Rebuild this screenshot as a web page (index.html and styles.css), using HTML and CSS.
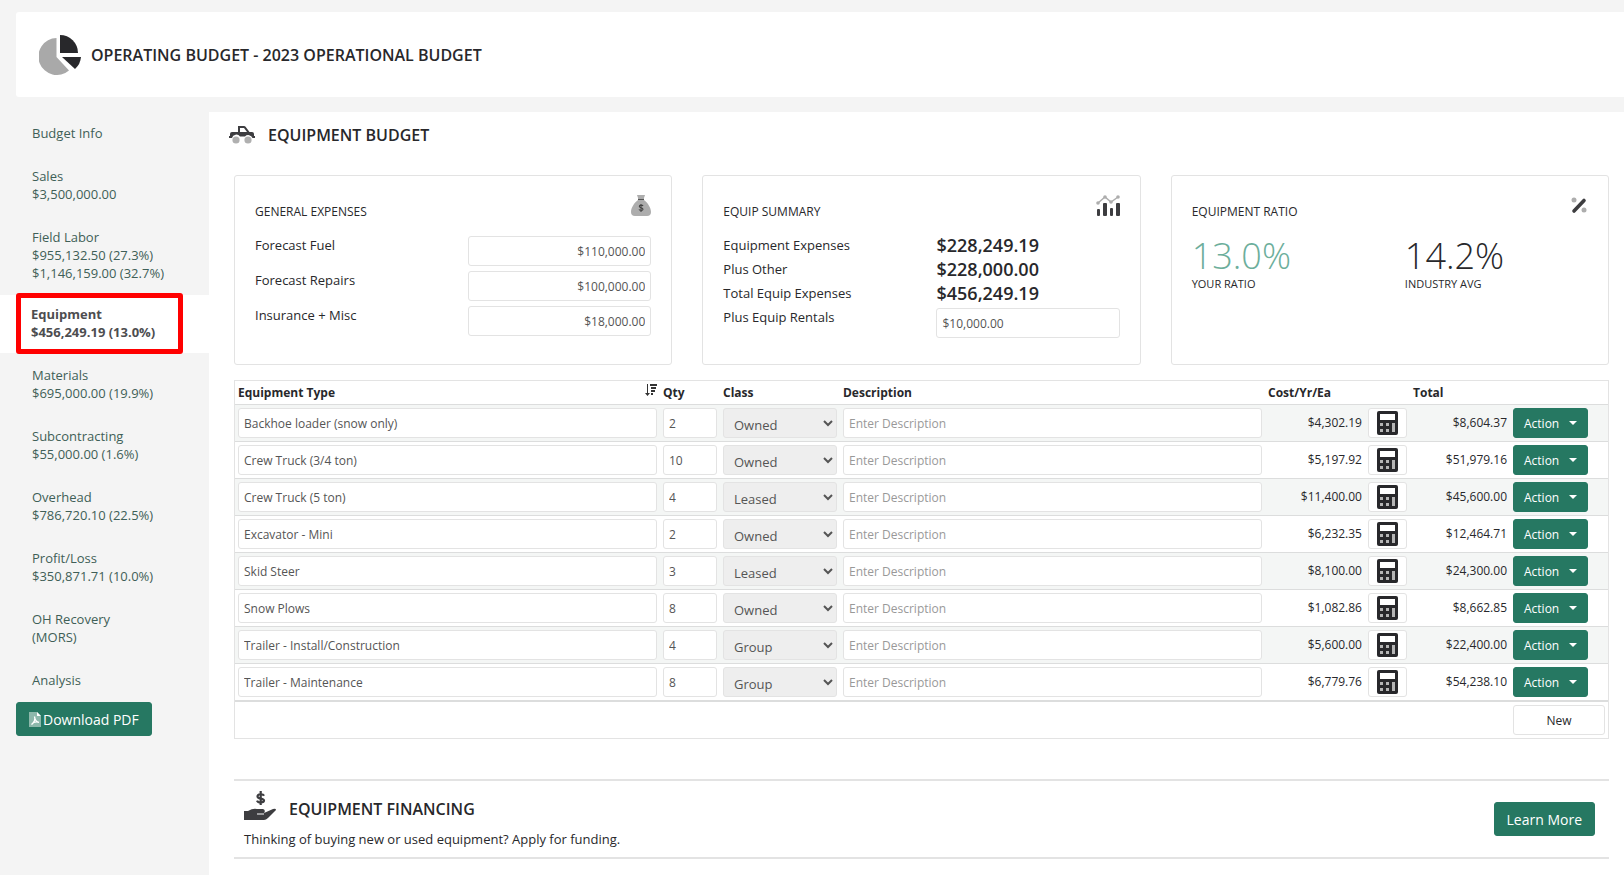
FILE: index.html
```html
<!DOCTYPE html>
<html lang="en">
<head>
<meta charset="utf-8">
<title>Operating Budget</title>
<link rel="stylesheet" href="styles.css">
</head>
<body>
  <header class="page-header">
    <svg class="pie-icon" width="42" height="40" viewBox="0 0 42 40">
      <path fill="#a9a9a9" d="M17.500 3v19L30 35.500A18.500 18.500 0 1 1 17.500 3z"/>
      <path fill="#28282b" d="M21 0a18 18 0 0 1 18 18H21z"/>
      <path fill="#28282b" d="M23 22h19a18 18 0 0 1-6 12z"/>
    </svg>
    <h1>OPERATING BUDGET - 2023 OPERATIONAL BUDGET</h1>
  </header>

  <div class="layout">
    <aside class="sidebar">
      <nav class="budget-nav">
        <a href="#">Budget Info</a>
        <a href="#">Sales<br>$3,500,000.00</a>
        <a href="#">Field Labor<br>$955,132.50 (27.3%)<br>$1,146,159.00 (32.7%)</a>
        <a href="#" class="active">Equipment<br>$456,249.19 (13.0%)</a>
        <a href="#">Materials<br>$695,000.00 (19.9%)</a>
        <a href="#">Subcontracting<br>$55,000.00 (1.6%)</a>
        <a href="#">Overhead<br>$786,720.10 (22.5%)</a>
        <a href="#">Profit/Loss<br>$350,871.71 (10.0%)</a>
        <a href="#">OH Recovery<br>(MORS)</a>
        <a href="#">Analysis</a>
      </nav>
      <button class="btn btn-green btn-large" type="button">
        <svg width="12" height="15" viewBox="0 0 12 15">
          <path fill="#8db8ab" d="M0 0h8l4 4v11H0z"/>
          <path fill="#fff" d="M8 0v4h4z"/>
          <path fill="none" stroke="#fff" stroke-width="1.3" d="M5.500 4.500c1 3-.5 6-3 8 1.500-2 4.500-3 7.500-2.200-2-.3-4-2.300-4.500-5.800"/>
        </svg>
        Download PDF
      </button>
    </aside>

    <main class="content">
      <div class="section-title">
        <svg width="26" height="18" viewBox="0 0 26 18">
          <path fill="#3d3d40" d="M9 0h6q1 0 1.600.8L20.500 6H23q2 0 2 2v2h1v2h-2.500a4.500 4.500 0 0 0-7.500-1.500h-5A4.500 4.500 0 0 0 3 12H0v-2h1V8q0-2 2-2h6zM11 2v4h7l-3-4z"/>
          <circle cx="7" cy="14" r="3.600" fill="#b0b0b0"/>
          <circle cx="19" cy="14" r="3.600" fill="#b0b0b0"/>
        </svg>
        <h2>EQUIPMENT BUDGET</h2>
      </div>

      <div class="cards">
        <section class="card">
          <div class="card-head">
            <h3>GENERAL EXPENSES</h3>
            <svg width="20" height="21" viewBox="0 0 20 21">
              <path fill="#adadad" d="M6 0h8l-1 3H7zM7 5h6c4 3 7 8 7 12q0 4-4 4H4q-4 0-4-4C0 13 3 8 7 5z"/>
              <path fill="#555" d="M7 3.500h6v1.500H7z"/>
              <path fill="none" stroke="#444" stroke-width="1.100" d="M12 11c-.5-1.200-3.700-1.200-3.700.4 0 1.700 3.700 1 3.700 2.800 0 1.600-3.400 1.600-4 .2M10 9v8"/>
            </svg>
          </div>
          <div class="field">
            <label for="fuel">Forecast Fuel</label>
            <input class="text-input right" type="text" id="fuel" value="$110,000.00">
          </div>
          <div class="field">
            <label for="repairs">Forecast Repairs</label>
            <input class="text-input right" type="text" id="repairs" value="$100,000.00">
          </div>
          <div class="field">
            <label for="insurance">Insurance + Misc</label>
            <input class="text-input right" type="text" id="insurance" value="$18,000.00">
          </div>
        </section>

        <section class="card">
          <div class="card-head">
            <h3>EQUIP SUMMARY</h3>
            <svg width="24" height="21" viewBox="0 0 24 21">
              <path fill="none" stroke="#adadad" stroke-width="1.400" d="M2 8l7-6 6 5 7-5"/>
              <g fill="#adadad"><circle cx="2" cy="8" r="1.800"/><circle cx="9" cy="2" r="1.800"/><circle cx="15" cy="7" r="1.800"/><circle cx="22" cy="2" r="1.800"/></g>
              <g fill="#3d3d40"><rect x="1" y="14" width="3" height="7" rx="1"/><rect x="7" y="8" width="4" height="13" rx="1"/><rect x="14" y="13" width="3" height="8" rx="1"/><rect x="20" y="8" width="4" height="13" rx="1"/></g>
            </svg>
          </div>
          <div class="summary-row"><span>Equipment Expenses</span><strong>$228,249.19</strong></div>
          <div class="summary-row"><span>Plus Other</span><strong>$228,000.00</strong></div>
          <div class="summary-row"><span>Total Equip Expenses</span><strong>$456,249.19</strong></div>
          <div class="field">
            <label for="rentals">Plus Equip Rentals</label>
            <input class="text-input" type="text" id="rentals" value="$10,000.00">
          </div>
        </section>

        <section class="card">
          <div class="card-head">
            <h3>EQUIPMENT RATIO</h3>
            <svg width="17" height="21" viewBox="1 0 17 21">
              <circle cx="4" cy="5" r="2.500" fill="#adadad"/>
              <circle cx="14" cy="15" r="2.500" fill="#adadad"/>
              <path stroke="#3d3d40" stroke-width="3.600" stroke-linecap="round" d="M4 16L14 5.500"/>
            </svg>
          </div>
          <div class="ratios">
            <div><div class="ratio yours">13.0%</div><div class="ratio-label">YOUR RATIO</div></div>
            <div><div class="ratio">14.2%</div><div class="ratio-label">INDUSTRY AVG</div></div>
          </div>
        </section>
      </div>

      <table class="equipment">
        <colgroup>
          <col><col class="c-qty"><col class="c-class"><col><col class="c-money"><col class="c-calc"><col class="c-money"><col class="c-action">
        </colgroup>
        <thead>
          <tr>
            <th><div class="sort-head">Equipment Type
              <svg width="12" height="12" viewBox="0 0 12 12"><path fill="#333" d="M2 0h1v9h2l-2.500 3L0 9h2zM5 0h7v2H5zM6 3h5v2H6zM6 6h4v2H6zM6 9h2v2H6z"/></svg>
            </div></th>
            <th>Qty</th>
            <th>Class</th>
            <th>Description</th>
            <th colspan="2">Cost/Yr/Ea</th>
            <th>Total</th>
            <th></th>
          </tr>
        </thead>
        <tbody id="rows"></tbody>
        <tfoot>
          <tr>
            <td colspan="7"></td>
            <td><button class="btn btn-new" type="button">New</button></td>
          </tr>
        </tfoot>
      </table>

      <section class="financing">
        <div>
          <div class="financing-title">
            <svg width="32" height="30" viewBox="0 0 32 30">
              <path fill="#3d3d40" d="M0 20h4q5-3 9-2h6q3 1 1 4l9-4q3-1 3 1l-8 8q-2 2-4 2H0z"/>
              <path stroke="#fff" stroke-width="1" d="M13 23h7"/>
              <path fill="none" stroke="#3d3d40" stroke-width="2.200" d="M20 4.800c-1-2.300-6.500-2-6.500.6 0 3 6.500 1.300 6.500 4.200 0 2.500-6 2.500-7 0M16.700 0v14"/>
            </svg>
            <h2>EQUIPMENT FINANCING</h2>
          </div>
          <p>Thinking of buying new or used equipment? Apply for funding.</p>
        </div>
        <button class="btn btn-green btn-large" type="button">Learn More</button>
      </section>
    </main>
  </div>

  <script src="rows.js"></script>
</body>
</html>
```
FILE: styles.css
```css
* {
  box-sizing: border-box;
}

body {
  font-family: "Open Sans", "Noto Sans", sans-serif;
  font-size: 13px;
  line-height: 18px;
  color: #28282b;
  background-color: #f4f4f4;
  margin: 0;
}

h1, h2, h3, p {
  margin: 0;
}

h1, h2 {
  font-size: 16px;
  line-height: 24px;
  font-weight: 600;
}

svg {
  display: block;
  flex-shrink: 0;
}

.page-header {
  display: flex;
  align-items: center;
  gap: 10px;
  height: 85px;
  margin: 12px 0 15px 16px;
  padding-left: 23px;
  background-color: white;
  border-radius: 3px 0 0 3px;
}

.layout {
  display: flex;
  min-height: calc(100vh - 112px);
}

/* sidebar */
.sidebar {
  width: 209px;
  flex-shrink: 0;
}

.budget-nav a {
  display: block;
  padding: 12px 0 13px 32px;
  color: #3f5f57;
  text-decoration: none;
}

.budget-nav .active {
  position: relative;
  padding: 10px 0 12px 31px;
  margin-bottom: 1px;
  background-color: white;
  color: #4d4d4f;
  font-weight: 700;
}

.budget-nav .active::after {
  content: "";
  box-sizing: border-box;
  position: absolute;
  top: -2px;
  left: 16px;
  width: 167px;
  height: 61px;
  border: 5px solid red;
  border-radius: 3px;
}

.sidebar .btn {
  margin-left: 16px;
}

/* buttons */
.btn {
  display: flex;
  align-items: center;
  justify-content: center;
  height: 30px;
  padding: 0 10px;
  border: 1px solid #e3e3e3;
  border-radius: 3px;
  background-color: white;
  color: #28282b;
  font-family: inherit;
  font-size: 12px;
  cursor: pointer;
}

.btn-green {
  border-color: #267862;
  background-color: #267862;
  color: white;
}

.btn-large {
  gap: 2px;
  height: 34px;
  padding: 0 12px;
  font-size: 14px;
}

.btn-action {
  gap: 10px;
}

.btn-calc {
  width: 39px;
  padding: 0;
}

.btn-new {
  width: 100%;
}

/* main */
.content {
  flex: 1;
  min-width: 0;
  padding: 11px 15px 0 25px;
  background-color: white;
}

.section-title {
  display: flex;
  align-items: center;
  gap: 13px;
  margin: 0 0 28px -5px;
}

.cards {
  display: grid;
  grid-template-columns: repeat(3, 1fr);
  gap: 30px;
}

.card {
  height: 190px;
  padding: 19px 20px;
  border: 1px solid #e3e3e3;
  border-radius: 3px;
}

.card-head {
  display: flex;
  justify-content: space-between;
  height: 41px;
}

.card-head h3 {
  padding-top: 8px;
  font-size: 12px;
  font-weight: 500;
}

.field,
.summary-row,
.ratios {
  display: grid;
  grid-template-columns: 1fr 1fr;
  column-gap: 30px;
}

.field {
  margin-bottom: 5px;
}

.summary-row {
  height: 24px;
}

.summary-row strong {
  font-size: 18px;
  font-weight: 600;
  line-height: 18px;
}

.text-input {
  width: 100%;
  height: 30px;
  padding: 0 5px;
  border: 1px solid #e3e3e3;
  border-radius: 3px;
  background-color: white;
  color: #555;
  font-family: inherit;
  font-size: 12px;
}

.text-input::placeholder {
  color: #999;
}

.right {
  text-align: right;
}

.ratio {
  font-size: 36px;
  font-weight: 300;
  line-height: 40px;
}

.yours {
  color: #6cae9b;
}

.ratio-label {
  font-size: 11px;
  line-height: 16px;
}

/* equipment table */
.equipment {
  width: 100%;
  margin-top: 15px;
  table-layout: fixed;
  border: 1px solid #e3e3e3;
  border-collapse: separate;
  border-spacing: 0;
  font-size: 12px;
}

.c-qty {
  width: 60px;
}

.c-class {
  width: 120px;
}

.c-money {
  width: 100px;
}

.c-calc {
  width: 45px;
}

.c-action {
  width: 98px;
}

.equipment th {
  height: 23px;
  padding: 0 3px;
  text-align: left;
  font-weight: 700;
}

.equipment td {
  height: 37px;
  padding: 3px;
  border-top: 1px solid #dcdddd;
}

.equipment tbody tr:nth-child(odd) {
  background-color: #f4f6f5;
}

.equipment tfoot td {
  border-top-width: 2px;
}

.equipment .money {
  text-align: right;
}

.sort-head {
  display: flex;
  justify-content: space-between;
}

.class-select {
  display: block;
  width: 100%;
  height: 30px;
  padding: 4px 0 0 6px;
  border: 1px solid #e3e3e3;
  border-radius: 3px;
  background-color: #eee;
  color: #555;
  font-family: inherit;
  font-size: 13px;
}

/* financing */
.financing {
  display: flex;
  align-items: center;
  justify-content: space-between;
  height: 80px;
  margin-top: 40px;
  padding: 0 14px 0 10px;
  border-top: 2px solid #e3e3e3;
  border-bottom: 2px solid #e3e3e3;
}

.financing-title {
  display: flex;
  align-items: flex-end;
  gap: 13px;
  margin-bottom: 9px;
}

.financing-title h2 {
  line-height: 24px;
}
```
FILE: rows.js
```js
const items = [
  ["Backhoe loader (snow only)", 2, "Owned", "$4,302.19", "$8,604.37"],
  ["Crew Truck (3/4 ton)", 10, "Owned", "$5,197.92", "$51,979.16"],
  ["Crew Truck (5 ton)", 4, "Leased", "$11,400.00", "$45,600.00"],
  ["Excavator - Mini", 2, "Owned", "$6,232.35", "$12,464.71"],
  ["Skid Steer", 3, "Leased", "$8,100.00", "$24,300.00"],
  ["Snow Plows", 8, "Owned", "$1,082.86", "$8,662.85"],
  ["Trailer - Install/Construction", 4, "Group", "$5,600.00", "$22,400.00"],
  ["Trailer - Maintenance", 8, "Group", "$6,779.76", "$54,238.10"]
];

const calcIcon = `<svg width="21" height="24" viewBox="0 0 21 24">
  <rect width="21" height="24" rx="2" fill="#28282b"/>
  <path fill="#fff" d="M3 3h15v6H3z"/>
  <path fill="#b5b5b5" d="M3 12h3v3H3zM9 12h3v3H9zM3 18h3v3H3zM9 18h3v3H9zM15 12h3v9h-3z"/>
</svg>`;

document.getElementById("rows").innerHTML = items.map(([name, qty, type, cost, total]) => {
  const options = ["Owned", "Leased", "Group"]
    .map(o => `<option${o === type ? " selected" : ""}>${o}</option>`).join("");
  return `<tr>
    <td><input class="text-input" type="text" aria-label="Equipment Type" value="${name}"></td>
    <td><input class="text-input" type="text" aria-label="Qty" value="${qty}"></td>
    <td><select class="class-select" aria-label="Class">${options}</select></td>
    <td><input class="text-input" type="text" aria-label="Description" placeholder="Enter Description"></td>
    <td class="money">${cost}</td>
    <td><button class="btn btn-calc" type="button" aria-label="Calculate">${calcIcon}</button></td>
    <td class="money">${total}</td>
    <td><button class="btn btn-green btn-action" type="button">Action
      <svg width="8" height="4" viewBox="0 0 8 4"><path fill="#fff" d="M0 0h8L4 4z"/></svg>
    </button></td>
  </tr>`;
}).join("");
```
